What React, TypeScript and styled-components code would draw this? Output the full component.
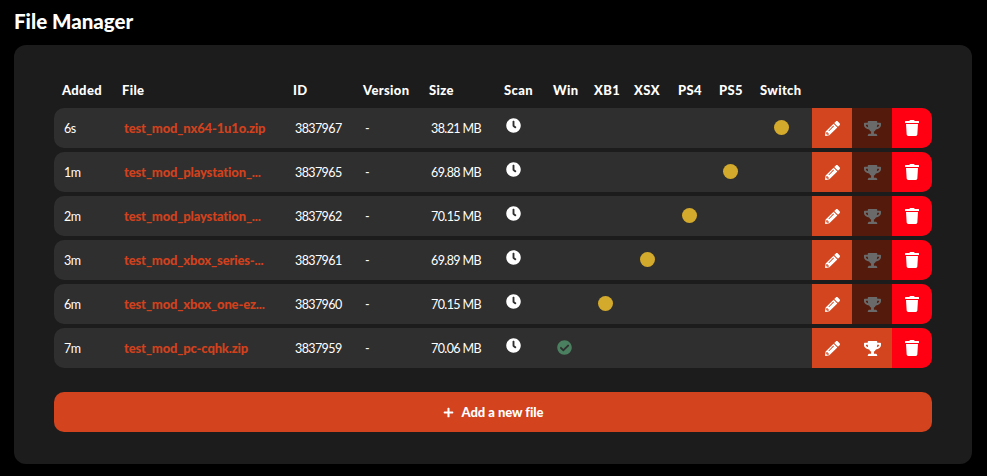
import React from "react";
import styled, { createGlobalStyle, css } from "styled-components";
import { FaClock, FaPencilAlt, FaTrophy, FaTrash, FaCheckCircle, FaPlus } from "react-icons/fa";

const Global = createGlobalStyle`
  html, body { margin: 0; padding: 0; background: #000; }
  body { font-family: Lato, "Noto Sans", sans-serif; color: #fff; }
`;

const columns = css`
  display: grid;
  grid-template-columns: 60px 171px 70px 66px 75px 49px 41px 40px 44px 41px 41px 60px 120px;
`;

const Page = styled.main`
  width: 987px;
  height: 476px;
  padding: 10px 15px 12px 14px;
  box-sizing: border-box;
  overflow: hidden;
`;

const Title = styled.h1`
  margin: 0 0 12px;
  font-size: 20.5px;
  line-height: 23px;
  font-weight: 900;
  color: #fff;
`;

const Panel = styled.section`
  height: 419px;
  box-sizing: border-box;
  padding: 34px 40px 0;
  background: #1c1c1c;
  border-radius: 12px;
`;

const HeaderRow = styled.div`
  ${columns}
  height: 29px;
  box-sizing: border-box;
  padding-bottom: 8px;
  align-items: center;
`;

const HeaderCell = styled.div`
  padding-left: 8px;
  font-size: 13px;
  font-weight: 900;
  letter-spacing: 0.35px;
  white-space: nowrap;
`;

const Rows = styled.div`
  display: flex;
  flex-direction: column;
  gap: 4px;
`;

const Row = styled.div`
  ${columns}
  height: 40px;
  background: #2f2f2f;
  border-radius: 10px;
  overflow: hidden;
  font-size: 12.5px;
  letter-spacing: -0.6px;
`;

const Cell = styled.div`
  display: flex;
  align-items: center;
  padding-left: 10px;
  min-width: 0;
  white-space: nowrap;
`;

const FileLink = styled.a`
  display: block;
  color: #d2411d;
  font-weight: 900;
  font-size: 13px;
  letter-spacing: -0.15px;
`;

const ScanCell = styled(Cell)`
  padding-bottom: 6px;
  font-size: 15px;
`;

const StatusCell = styled.div`
  display: flex;
  align-items: center;
  justify-content: center;
  padding: 0 2px 2px 0;
`;

const Dot = styled.span`
  width: 15px;
  height: 15px;
  border-radius: 50%;
  background: #d4aa2c;
`;

const Passed = styled(FaCheckCircle)`
  color: #4a8060;
  font-size: 15px;
`;

const Actions = styled.div`
  display: grid;
  grid-template-columns: repeat(3, 40px);
`;

const Action = styled.button<{ $variant: "edit" | "off" | "delete" }>`
  display: flex;
  align-items: center;
  justify-content: center;
  padding: 0;
  border: 0;
  font-size: 16px;
  color: ${(p) => (p.$variant === "off" ? "#6a6a6a" : "#fff")};
  background: ${(p) =>
    p.$variant === "edit" ? "#d2451e" : p.$variant === "off" ? "#541b0c" : "#ff0012"};
`;

const Trophy = styled(FaTrophy)`
  font-size: 17px;
`;

const Pencil = styled(FaPencilAlt)`
  font-size: 15px;
`;

const AddButton = styled.button`
  display: flex;
  align-items: center;
  justify-content: center;
  gap: 8px;
  width: 100%;
  height: 40px;
  margin-top: 24px;
  padding: 0;
  border: 0;
  border-radius: 10px;
  background: #d2431e;
  color: #fff;
  font-family: inherit;
  font-size: 13px;
  font-weight: 900;
  letter-spacing: -0.05px;
`;

const heads = ["Added", "File", "ID", "Version", "Size", "Scan", "Win", "XB1", "XSX", "PS4", "PS5", "Switch", ""];

const files = [
  { added: "6s", name: "test_mod_nx64-1u1o.zip", id: "3837967", size: "38.21 MB", slot: 5 },
  { added: "1m", name: "test_mod_playstation_...", id: "3837965", size: "69.88 MB", slot: 4 },
  { added: "2m", name: "test_mod_playstation_...", id: "3837962", size: "70.15 MB", slot: 3 },
  { added: "3m", name: "test_mod_xbox_series-...", id: "3837961", size: "69.89 MB", slot: 2 },
  { added: "6m", name: "test_mod_xbox_one-ez...", id: "3837960", size: "70.15 MB", slot: 1 },
  { added: "7m", name: "test_mod_pc-cqhk.zip", id: "3837959", size: "70.06 MB", slot: 0, done: true },
];

export default function App() {
  return (
    <Page>
      <Global />
      <Title>File Manager</Title>
      <Panel>
        <HeaderRow>
          {heads.map((h, i) => (
            <HeaderCell key={i}>{h}</HeaderCell>
          ))}
        </HeaderRow>
        <Rows>
          {files.map((f) => (
            <Row key={f.id}>
              <Cell>{f.added}</Cell>
              <Cell>
                <FileLink>{f.name}</FileLink>
              </Cell>
              <Cell>{f.id}</Cell>
              <Cell>-</Cell>
              <Cell>{f.size}</Cell>
              <ScanCell>
                <FaClock />
              </ScanCell>
              {[0, 1, 2, 3, 4, 5].map((s) => (
                <StatusCell key={s}>{s === f.slot && (f.done ? <Passed /> : <Dot />)}</StatusCell>
              ))}
              <Actions>
                <Action $variant="edit">
                  <Pencil />
                </Action>
                <Action $variant={f.done ? "edit" : "off"}>
                  <Trophy />
                </Action>
                <Action $variant="delete">
                  <FaTrash />
                </Action>
              </Actions>
            </Row>
          ))}
        </Rows>
        <AddButton>
          <FaPlus size={11} />
          Add a new file
        </AddButton>
      </Panel>
    </Page>
  );
}
